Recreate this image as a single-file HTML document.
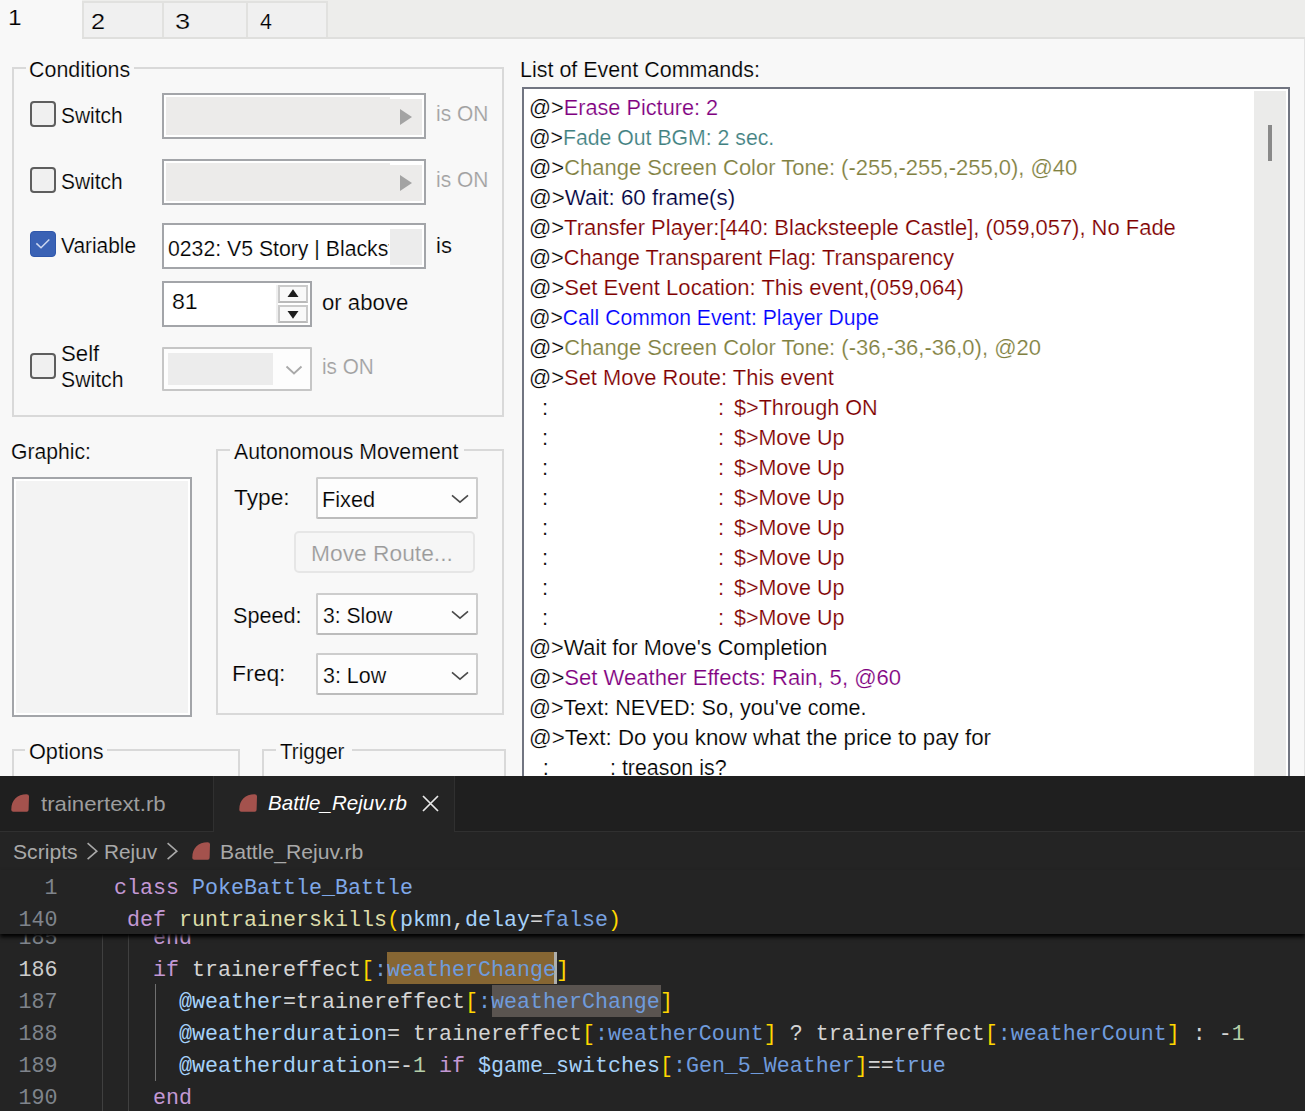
<!DOCTYPE html>
<html><head><meta charset="utf-8">
<style>
html,body{margin:0;padding:0}
body{width:1305px;height:1111px;overflow:hidden;position:relative;background:#f8f8f8;font-family:"Liberation Sans",sans-serif}
.a{position:absolute;box-sizing:border-box}
.t{position:absolute;white-space:pre;transform-origin:0 0;color:#000}
.m{position:absolute;white-space:pre;font-family:"Liberation Mono",monospace;color:#d4d4d4}
.gb{position:absolute;box-sizing:border-box;border:2px solid #d9d9d9}
.cb{position:absolute;box-sizing:border-box;width:26px;height:26px;border:2px solid #5e5e5e;border-radius:4px;background:#f0f0f0}
.combo{position:absolute;box-sizing:border-box;border:2px solid #cdcdcd;border-bottom-color:#bcbcbc;border-radius:2px;background:#fdfdfd}
.sw{position:absolute;box-sizing:border-box;border:2px solid #a3a5a9;background:#ecebea;box-shadow:inset 0 0 0 2px #fff}
</style></head><body>
<!-- tab strip -->
<div class="a" style="left:0;top:0;width:1305px;height:39px;background:#ededeb;border-bottom:2px solid #dfdfdd"></div>
<div class="a" style="left:0;top:0;width:82px;height:39px;background:#f8f8f8"></div>
<div class="a" style="left:82px;top:1px;width:246px;height:36px;background:#f0f0f0;border-top:2px solid #e1e1df"></div>
<div class="a" style="left:82px;top:1px;width:2px;height:36px;background:#e1e1df"></div>
<div class="a" style="left:162px;top:1px;width:2px;height:36px;background:#e1e1df"></div>
<div class="a" style="left:246px;top:1px;width:2px;height:36px;background:#e1e1df"></div>
<div class="a" style="left:326px;top:1px;width:2px;height:36px;background:#e1e1df"></div>
<div class="a" style="left:1304px;top:39px;width:1px;height:737px;background:#e3e3e3"></div>

<!-- conditions group -->
<div class="gb" style="left:12px;top:67px;width:492px;height:350px"></div>
<div class="a" style="left:26px;top:55px;width:108px;height:26px;background:#f8f8f8"></div>
<div class="cb" style="left:30px;top:101px"></div>
<div class="sw" style="left:162px;top:93px;width:264px;height:46px"></div>
<div class="a" style="left:390px;top:97px;width:32px;height:2px;background:#fff"></div>
<svg class="a" style="left:398px;top:108px" width="16" height="18"><path d="M2 1 L14 9 L2 17 Z" fill="#a3a3a3"/></svg>
<div class="cb" style="left:30px;top:167px"></div>
<div class="sw" style="left:162px;top:159px;width:264px;height:46px"></div>
<div class="a" style="left:390px;top:163px;width:32px;height:2px;background:#fff"></div>
<svg class="a" style="left:398px;top:174px" width="16" height="18"><path d="M2 1 L14 9 L2 17 Z" fill="#a3a3a3"/></svg>
<div class="a" style="left:30px;top:231px;width:26px;height:26px;border-radius:4px;background:#3a62b5;border:1px solid #2f57ab"></div>
<svg class="a" style="left:30px;top:231px" width="26" height="26"><path d="M6.4 12.4 L11 16.8 L19.3 8.5" stroke="#cdd8f0" stroke-width="1.5" fill="none"/></svg>
<div class="a" style="left:162px;top:223px;width:264px;height:46px;border:2px solid #a3a5a9;background:#fff"></div>
<div class="a" style="left:390px;top:229px;width:32px;height:36px;background:#ececec"></div>
<div class="a" style="left:162px;top:281px;width:150px;height:46px;border:2px solid #a3a5a9;background:#fff"></div>
<div class="a" style="left:276px;top:285px;width:2px;height:38px;background:#efefef"></div>
<div class="a" style="left:278px;top:285px;width:30px;height:18px;border:2px solid #cacaca;border-bottom-color:#bababa;background:#f9f9f9"></div>
<div class="a" style="left:278px;top:305px;width:30px;height:18px;border:2px solid #cacaca;border-bottom-color:#bababa;background:#f9f9f9"></div>
<svg class="a" style="left:276px;top:285px" width="32" height="38"><path d="M11.5 12 L17 4.3 L22.5 12 Z" fill="#1e1e1e"/><path d="M11.5 26 L17 33.8 L22.5 26 Z" fill="#1e1e1e"/></svg>
<div class="cb" style="left:30px;top:353px"></div>
<div class="a" style="left:162px;top:347px;width:150px;height:44px;border:2px solid #c6c6c6;background:#fdfdfd;border-radius:1px"></div>
<div class="a" style="left:168px;top:353px;width:105px;height:32px;background:#ececec"></div>
<svg class="a" style="left:284px;top:362px" width="20" height="14"><path d="M2.5 4.5 L10 11.5 L17.5 4.5" stroke="#a9a9a9" stroke-width="1.9" fill="none"/></svg>

<!-- graphic -->
<div class="a" style="left:12px;top:477px;width:180px;height:240px;border:2px solid #a3a5a9;background:#f3f3f3;box-shadow:inset 0 0 0 2px #fff"></div>
<!-- autonomous movement -->
<div class="gb" style="left:216px;top:449px;width:288px;height:266px"></div>
<div class="a" style="left:229.5px;top:437px;width:234.5px;height:26px;background:#f8f8f8"></div>
<div class="combo" style="left:316px;top:477px;width:162px;height:42px"></div>
<svg class="a" style="left:450px;top:490px" width="20" height="14"><path d="M2 5.3 L10 12.2 L18 5.3" stroke="#4a4a4a" stroke-width="1.6" fill="none"/></svg>
<div class="a" style="left:294px;top:531px;width:181px;height:42px;border:2px solid #e6e6e6;border-radius:5px;background:#f6f6f6"></div>
<div class="combo" style="left:316px;top:593px;width:162px;height:42px"></div>
<svg class="a" style="left:450px;top:606px" width="20" height="14"><path d="M2 5.3 L10 12.2 L18 5.3" stroke="#4a4a4a" stroke-width="1.6" fill="none"/></svg>
<div class="combo" style="left:316px;top:653px;width:162px;height:42px"></div>
<svg class="a" style="left:450px;top:667px" width="20" height="14"><path d="M2 5.3 L10 12.2 L18 5.3" stroke="#4a4a4a" stroke-width="1.6" fill="none"/></svg>
<!-- options / trigger -->
<div class="gb" style="left:12px;top:749px;width:228px;height:60px"></div>
<div class="a" style="left:25px;top:737px;width:82px;height:26px;background:#f8f8f8"></div>
<div class="gb" style="left:262px;top:749px;width:244px;height:60px"></div>
<div class="a" style="left:276px;top:737px;width:76px;height:26px;background:#f8f8f8"></div>

<!-- event list -->
<div class="a" style="left:522px;top:87px;width:768px;height:720px;border:2px solid #717581;background:#fff"></div>
<div class="a" style="left:1254px;top:91px;width:32px;height:685px;background:#ebebea"></div>
<div class="a" style="left:1268px;top:125px;width:4px;height:36px;background:#898989"></div>

<div class="t" style="left:7.78px;top:6.28px;font-size:22px;line-height:22px;transform:scale(1.1111,1.0400);-webkit-text-stroke:0.2px #f8f8f8"><span style="color:#000">1</span></div>
<div class="t" style="left:91.05px;top:9.78px;font-size:22px;line-height:22px;transform:scale(1.1500,1.0400);-webkit-text-stroke:0.2px #f8f8f8"><span style="color:#000">2</span></div>
<div class="t" style="left:174.66px;top:10.28px;font-size:22px;line-height:22px;transform:scale(1.2400,1.0400);-webkit-text-stroke:0.2px #f8f8f8"><span style="color:#000">3</span></div>
<div class="t" style="left:260.00px;top:10.28px;font-size:22px;line-height:22px;transform:scale(0.9750,1.0400);-webkit-text-stroke:0.2px #f8f8f8"><span style="color:#000">4</span></div>
<div class="t" style="left:28.73px;top:57.78px;font-size:22px;line-height:22px;transform:scale(0.9735,1.0400);-webkit-text-stroke:0.2px #f8f8f8"><span style="color:#000">Conditions</span></div>
<div class="t" style="left:61.05px;top:103.68px;font-size:22px;line-height:22px;transform:scale(0.9524,1.0400);-webkit-text-stroke:0.2px #f8f8f8"><span style="color:#000">Switch</span></div>
<div class="t" style="left:436.05px;top:102.18px;font-size:22px;line-height:22px;transform:scale(0.9519,1.0400);-webkit-text-stroke:0.2px #f8f8f8"><span style="color:#a0a0a0">is ON</span></div>
<div class="t" style="left:61.05px;top:170.18px;font-size:22px;line-height:22px;transform:scale(0.9524,1.0400);-webkit-text-stroke:0.2px #f8f8f8"><span style="color:#000">Switch</span></div>
<div class="t" style="left:436.05px;top:167.98px;font-size:22px;line-height:22px;transform:scale(0.9519,1.0400);-webkit-text-stroke:0.2px #f8f8f8"><span style="color:#a0a0a0">is ON</span></div>
<div class="t" style="left:61.40px;top:234.28px;font-size:22px;line-height:22px;transform:scale(0.9500,1.0400);-webkit-text-stroke:0.2px #f8f8f8"><span style="color:#000">Variable</span></div>
<div class="t" style="left:168.03px;top:236.98px;font-size:22px;line-height:22px;transform:scale(0.9650,1.0400);-webkit-text-stroke:0.2px #fdfdfd;width:229.0px;overflow:hidden"><span style="color:#000">0232: V5 Story </span><span style="color:#000">|</span><span style="color:#000"> Blacksteeple</span></div>
<div class="t" style="left:436.00px;top:234.28px;font-size:22px;line-height:22px;transform:scale(1.0000,1.0400);-webkit-text-stroke:0.2px #f8f8f8"><span style="color:#000">is</span></div>
<div class="t" style="left:172.35px;top:290.08px;font-size:22px;line-height:22px;transform:scale(1.0522,1.0400);-webkit-text-stroke:0.2px #fdfdfd"><span style="color:#000">81</span></div>
<div class="t" style="left:322.39px;top:291.08px;font-size:22px;line-height:22px;transform:scale(1.0071,1.0400);-webkit-text-stroke:0.2px #fdfdfd"><span style="color:#000">or above</span></div>
<div class="t" style="left:60.79px;top:342.08px;font-size:22px;line-height:22px;transform:scale(1.0081,1.0400);-webkit-text-stroke:0.2px #f8f8f8"><span style="color:#000">Self</span></div>
<div class="t" style="left:60.84px;top:367.88px;font-size:22px;line-height:22px;transform:scale(0.9635,1.0400);-webkit-text-stroke:0.2px #f8f8f8"><span style="color:#000">Switch</span></div>
<div class="t" style="left:322.46px;top:355.28px;font-size:22px;line-height:22px;transform:scale(0.9423,1.0400);-webkit-text-stroke:0.2px #f8f8f8"><span style="color:#a0a0a0">is ON</span></div>
<div class="t" style="left:11.14px;top:439.58px;font-size:22px;line-height:22px;transform:scale(0.9613,1.0400);-webkit-text-stroke:0.2px #f8f8f8"><span style="color:#000">Graphic:</span></div>
<div class="t" style="left:234.30px;top:439.68px;font-size:22px;line-height:22px;transform:scale(0.9659,1.0400);-webkit-text-stroke:0.2px #f8f8f8"><span style="color:#000">Autonomous Movement</span></div>
<div class="t" style="left:234.00px;top:485.98px;font-size:22px;line-height:22px;transform:scale(1.0346,1.0400);-webkit-text-stroke:0.2px #f8f8f8"><span style="color:#000">Type:</span></div>
<div class="t" style="left:321.62px;top:487.98px;font-size:22px;line-height:22px;transform:scale(0.9882,1.0400);-webkit-text-stroke:0.2px #fdfdfd"><span style="color:#000">Fixed</span></div>
<div class="t" style="left:310.53px;top:542.28px;font-size:22px;line-height:22px;transform:scale(1.0353,1.0400);-webkit-text-stroke:0.2px #f8f8f8"><span style="color:#9a9a9a">Move Route...</span></div>
<div class="t" style="left:232.92px;top:603.98px;font-size:22px;line-height:22px;transform:scale(0.9836,1.0400);-webkit-text-stroke:0.2px #f8f8f8"><span style="color:#000">Speed:</span></div>
<div class="t" style="left:322.84px;top:604.08px;font-size:22px;line-height:22px;transform:scale(0.9606,1.0400);-webkit-text-stroke:0.2px #fdfdfd"><span style="color:#000">3: Slow</span></div>
<div class="t" style="left:231.82px;top:661.88px;font-size:22px;line-height:22px;transform:scale(1.0417,1.0400);-webkit-text-stroke:0.2px #f8f8f8"><span style="color:#000">Freq:</span></div>
<div class="t" style="left:322.83px;top:663.98px;font-size:22px;line-height:22px;transform:scale(0.9734,1.0400);-webkit-text-stroke:0.2px #fdfdfd"><span style="color:#000">3: Low</span></div>
<div class="t" style="left:28.91px;top:739.68px;font-size:22px;line-height:22px;transform:scale(0.9851,1.0400);-webkit-text-stroke:0.2px #f8f8f8"><span style="color:#000">Options</span></div>
<div class="t" style="left:280.00px;top:739.68px;font-size:22px;line-height:22px;transform:scale(0.9362,1.0400);-webkit-text-stroke:0.2px #f8f8f8"><span style="color:#000">Trigger</span></div>
<div class="t" style="left:519.65px;top:57.68px;font-size:22px;line-height:22px;transform:scale(0.9764,1.0400);-webkit-text-stroke:0.2px #f8f8f8"><span style="color:#000">List of Event Commands:</span></div>
<div class="t" style="left:528.73px;top:96.08px;font-size:22px;line-height:22px;transform:scale(0.9868,1.0400);-webkit-text-stroke:0.2px #ffffff"><span style="color:#000">@&gt;</span><span style="color:#800080">Erase Picture: 2</span></div>
<div class="t" style="left:528.77px;top:126.08px;font-size:22px;line-height:22px;transform:scale(0.9652,1.0400);-webkit-text-stroke:0.2px #ffffff"><span style="color:#000">@&gt;</span><span style="color:#408080">Fade Out BGM: 2 sec.</span></div>
<div class="t" style="left:528.70px;top:156.08px;font-size:22px;line-height:22px;transform:scale(0.9991,1.0400);-webkit-text-stroke:0.2px #ffffff"><span style="color:#000">@&gt;</span><span style="color:#808040">Change Screen Color Tone: (-255,-255,-255,0), @40</span></div>
<div class="t" style="left:528.67px;top:186.08px;font-size:22px;line-height:22px;transform:scale(1.0150,1.0400);-webkit-text-stroke:0.2px #ffffff"><span style="color:#000">@&gt;</span><span style="color:#000040">Wait: 60 frame(s)</span></div>
<div class="t" style="left:528.70px;top:216.08px;font-size:22px;line-height:22px;transform:scale(0.9978,1.0400);-webkit-text-stroke:0.2px #ffffff"><span style="color:#000">@&gt;</span><span style="color:#800000">Transfer Player:[440: Blacksteeple Castle], (059,057), No Fade</span></div>
<div class="t" style="left:528.72px;top:246.08px;font-size:22px;line-height:22px;transform:scale(0.9881,1.0400);-webkit-text-stroke:0.2px #ffffff"><span style="color:#000">@&gt;</span><span style="color:#800000">Change Transparent Flag: Transparency</span></div>
<div class="t" style="left:528.69px;top:276.08px;font-size:22px;line-height:22px;transform:scale(1.0030,1.0400);-webkit-text-stroke:0.2px #ffffff"><span style="color:#000">@&gt;</span><span style="color:#800000">Set Event Location: This event,(059,064)</span></div>
<div class="t" style="left:528.78px;top:306.08px;font-size:22px;line-height:22px;transform:scale(0.9615,1.0400);-webkit-text-stroke:0.2px #ffffff"><span style="color:#000">@&gt;</span><span style="color:#0000ff">Call Common Event: Player Dupe</span></div>
<div class="t" style="left:528.70px;top:336.08px;font-size:22px;line-height:22px;transform:scale(0.9998,1.0400);-webkit-text-stroke:0.2px #ffffff"><span style="color:#000">@&gt;</span><span style="color:#808040">Change Screen Color Tone: (-36,-36,-36,0), @20</span></div>
<div class="t" style="left:528.71px;top:366.08px;font-size:22px;line-height:22px;transform:scale(0.9954,1.0400);-webkit-text-stroke:0.2px #ffffff"><span style="color:#000">@&gt;</span><span style="color:#800000">Set Move Route: This event</span></div>
<div class="t" style="left:541.90px;top:396.08px;font-size:22px;line-height:22px;transform:scale(1.0000,1.0400);-webkit-text-stroke:0.2px #ffffff"><span style="color:#000">:</span></div>
<div class="t" style="left:718.00px;top:396.08px;font-size:22px;line-height:22px;transform:scale(1.0000,1.0400);-webkit-text-stroke:0.2px #ffffff"><span style="color:#800000">:</span></div>
<div class="t" style="left:733.70px;top:396.08px;font-size:22px;line-height:22px;transform:scale(0.9828,1.0400);-webkit-text-stroke:0.2px #ffffff"><span style="color:#800000">$&gt;Through ON</span></div>
<div class="t" style="left:541.90px;top:426.08px;font-size:22px;line-height:22px;transform:scale(1.0000,1.0400);-webkit-text-stroke:0.2px #ffffff"><span style="color:#000">:</span></div>
<div class="t" style="left:718.00px;top:426.08px;font-size:22px;line-height:22px;transform:scale(1.0000,1.0400);-webkit-text-stroke:0.2px #ffffff"><span style="color:#800000">:</span></div>
<div class="t" style="left:733.70px;top:426.08px;font-size:22px;line-height:22px;transform:scale(0.9761,1.0400);-webkit-text-stroke:0.2px #ffffff"><span style="color:#800000">$&gt;Move Up</span></div>
<div class="t" style="left:541.90px;top:456.08px;font-size:22px;line-height:22px;transform:scale(1.0000,1.0400);-webkit-text-stroke:0.2px #ffffff"><span style="color:#000">:</span></div>
<div class="t" style="left:718.00px;top:456.08px;font-size:22px;line-height:22px;transform:scale(1.0000,1.0400);-webkit-text-stroke:0.2px #ffffff"><span style="color:#800000">:</span></div>
<div class="t" style="left:733.70px;top:456.08px;font-size:22px;line-height:22px;transform:scale(0.9761,1.0400);-webkit-text-stroke:0.2px #ffffff"><span style="color:#800000">$&gt;Move Up</span></div>
<div class="t" style="left:541.90px;top:486.08px;font-size:22px;line-height:22px;transform:scale(1.0000,1.0400);-webkit-text-stroke:0.2px #ffffff"><span style="color:#000">:</span></div>
<div class="t" style="left:718.00px;top:486.08px;font-size:22px;line-height:22px;transform:scale(1.0000,1.0400);-webkit-text-stroke:0.2px #ffffff"><span style="color:#800000">:</span></div>
<div class="t" style="left:733.70px;top:486.08px;font-size:22px;line-height:22px;transform:scale(0.9761,1.0400);-webkit-text-stroke:0.2px #ffffff"><span style="color:#800000">$&gt;Move Up</span></div>
<div class="t" style="left:541.90px;top:516.08px;font-size:22px;line-height:22px;transform:scale(1.0000,1.0400);-webkit-text-stroke:0.2px #ffffff"><span style="color:#000">:</span></div>
<div class="t" style="left:718.00px;top:516.08px;font-size:22px;line-height:22px;transform:scale(1.0000,1.0400);-webkit-text-stroke:0.2px #ffffff"><span style="color:#800000">:</span></div>
<div class="t" style="left:733.70px;top:516.08px;font-size:22px;line-height:22px;transform:scale(0.9761,1.0400);-webkit-text-stroke:0.2px #ffffff"><span style="color:#800000">$&gt;Move Up</span></div>
<div class="t" style="left:541.90px;top:546.08px;font-size:22px;line-height:22px;transform:scale(1.0000,1.0400);-webkit-text-stroke:0.2px #ffffff"><span style="color:#000">:</span></div>
<div class="t" style="left:718.00px;top:546.08px;font-size:22px;line-height:22px;transform:scale(1.0000,1.0400);-webkit-text-stroke:0.2px #ffffff"><span style="color:#800000">:</span></div>
<div class="t" style="left:733.70px;top:546.08px;font-size:22px;line-height:22px;transform:scale(0.9761,1.0400);-webkit-text-stroke:0.2px #ffffff"><span style="color:#800000">$&gt;Move Up</span></div>
<div class="t" style="left:541.90px;top:576.08px;font-size:22px;line-height:22px;transform:scale(1.0000,1.0400);-webkit-text-stroke:0.2px #ffffff"><span style="color:#000">:</span></div>
<div class="t" style="left:718.00px;top:576.08px;font-size:22px;line-height:22px;transform:scale(1.0000,1.0400);-webkit-text-stroke:0.2px #ffffff"><span style="color:#800000">:</span></div>
<div class="t" style="left:733.70px;top:576.08px;font-size:22px;line-height:22px;transform:scale(0.9761,1.0400);-webkit-text-stroke:0.2px #ffffff"><span style="color:#800000">$&gt;Move Up</span></div>
<div class="t" style="left:541.90px;top:606.08px;font-size:22px;line-height:22px;transform:scale(1.0000,1.0400);-webkit-text-stroke:0.2px #ffffff"><span style="color:#000">:</span></div>
<div class="t" style="left:718.00px;top:606.08px;font-size:22px;line-height:22px;transform:scale(1.0000,1.0400);-webkit-text-stroke:0.2px #ffffff"><span style="color:#800000">:</span></div>
<div class="t" style="left:733.70px;top:606.08px;font-size:22px;line-height:22px;transform:scale(0.9761,1.0400);-webkit-text-stroke:0.2px #ffffff"><span style="color:#800000">$&gt;Move Up</span></div>
<div class="t" style="left:528.73px;top:636.08px;font-size:22px;line-height:22px;transform:scale(0.9860,1.0400);-webkit-text-stroke:0.2px #ffffff"><span style="color:#000">@&gt;</span><span style="color:#000000">Wait for Move's Completion</span></div>
<div class="t" style="left:528.69px;top:666.08px;font-size:22px;line-height:22px;transform:scale(1.0030,1.0400);-webkit-text-stroke:0.2px #ffffff"><span style="color:#000">@&gt;</span><span style="color:#800080">Set Weather Effects: Rain, 5, @60</span></div>
<div class="t" style="left:528.74px;top:696.08px;font-size:22px;line-height:22px;transform:scale(0.9815,1.0400);-webkit-text-stroke:0.2px #ffffff"><span style="color:#000">@&gt;</span><span style="color:#000000">Text: NEVED: So, you've come.</span></div>
<div class="t" style="left:528.67px;top:726.08px;font-size:22px;line-height:22px;transform:scale(1.0134,1.0400);-webkit-text-stroke:0.2px #ffffff"><span style="color:#000">@&gt;</span><span style="color:#000000">Text: Do you know what the price to pay for</span></div>
<div class="t" style="left:542.70px;top:756.08px;font-size:22px;line-height:22px;transform:scale(1.0000,1.0400);-webkit-text-stroke:0.2px #ffffff"><span style="color:#000">:</span></div>
<div class="t" style="left:610.45px;top:756.08px;font-size:22px;line-height:22px;transform:scale(0.9726,1.0400);-webkit-text-stroke:0.2px #ffffff"><span style="color:#000">: treason is?</span></div>

<!-- VS Code -->
<div class="a" style="left:0;top:776px;width:1305px;height:335px;background:#242424;overflow:hidden">
<div class="a" style="left:0;top:0;width:1305px;height:56px;background:#1f1f1f;border-bottom:1px solid #303030"></div>
<div class="a" style="left:213px;top:0;width:1px;height:55px;background:#303030"></div>
<div class="a" style="left:214px;top:0;width:240px;height:57px;background:#242424"></div>
<div class="a" style="left:454px;top:0;width:1px;height:56px;background:#303030"></div>
<svg class="a" style="left:11px;top:18px" width="19" height="19"><path d="M0.3 15.5 C0.3 6 6.5 0.3 15.5 0.3 Q18 0.3 18 2.3 L17.6 15.8 Q17.6 17.7 15.7 17.7 L2.3 17.7 Q0.3 17.7 0.3 16 Z" fill="#a4524d"/></svg>
<svg class="a" style="left:239px;top:18px" width="19" height="19"><path d="M0.3 15.5 C0.3 6 6.5 0.3 15.5 0.3 Q18 0.3 18 2.3 L17.6 15.8 Q17.6 17.7 15.7 17.7 L2.3 17.7 Q0.3 17.7 0.3 16 Z" fill="#a4524d"/></svg>
<svg class="a" style="left:421px;top:18px" width="19" height="19"><path d="M2 2 L17 17 M17 2 L2 17" stroke="#e8e8e8" stroke-width="1.7"/></svg>
<svg class="a" style="left:85px;top:66px" width="14" height="19"><path d="M2.6 1.2 L11.8 9.2 L2.6 17.2" stroke="#a9a9a9" stroke-width="1.6" fill="none"/></svg>
<svg class="a" style="left:165px;top:66px" width="14" height="19"><path d="M2.6 1.2 L11.8 9.2 L2.6 17.2" stroke="#a9a9a9" stroke-width="1.6" fill="none"/></svg>
<svg class="a" style="left:192px;top:66px" width="19" height="19"><path d="M0.3 15.5 C0.3 6 6.5 0.3 15.5 0.3 Q18 0.3 18 2.3 L17.6 15.8 Q17.6 17.7 15.7 17.7 L2.3 17.7 Q0.3 17.7 0.3 16 Z" fill="#a4524d"/></svg>
<div class="a" style="left:101.5px;top:158px;width:1.3px;height:177px;background:#404040"></div>
<div class="a" style="left:127.8px;top:158px;width:1.3px;height:177px;background:#404040"></div>
<div class="a" style="left:154.5px;top:208px;width:1.5px;height:97px;background:#707070"></div>
<div class="a" style="left:386.7px;top:176.4px;width:167.7px;height:31.8px;background:#866633"></div>
<div class="a" style="left:554.4px;top:176.4px;width:2.6px;height:31.8px;background:#aeafad"></div>
<div class="a" style="left:491.9px;top:209.0px;width:168.7px;height:31.6px;background:#5a5450"></div>
<div class="m" style="left:18.50px;top:151.95px;font-size:21.667px;line-height:21.667px;color:#7f848c">185</div>
<div class="m" style="left:153.00px;top:151.95px;font-size:21.667px;line-height:21.667px"><span style="color:#c398d4">end</span></div>
<div class="m" style="left:18.50px;top:184.00px;font-size:21.667px;line-height:21.667px;color:#cccccc">186</div>
<div class="m" style="left:153.00px;top:184.00px;font-size:21.667px;line-height:21.667px"><span style="color:#c398d4">if</span><span style="color:#d4d4d4"> trainereffect</span><span style="color:#ffd700">[</span><span style="color:#6f9bdc">:weatherChange</span><span style="color:#ffd700">]</span></div>
<div class="m" style="left:18.50px;top:216.05px;font-size:21.667px;line-height:21.667px;color:#7f848c">187</div>
<div class="m" style="left:179.00px;top:216.05px;font-size:21.667px;line-height:21.667px"><span style="color:#a6d2fa">@weather</span><span style="color:#d4d4d4">=trainereffect</span><span style="color:#ffd700">[</span><span style="color:#6f9bdc">:weatherChange</span><span style="color:#ffd700">]</span></div>
<div class="m" style="left:18.50px;top:248.10px;font-size:21.667px;line-height:21.667px;color:#7f848c">188</div>
<div class="m" style="left:179.00px;top:248.10px;font-size:21.667px;line-height:21.667px"><span style="color:#a6d2fa">@weatherduration</span><span style="color:#d4d4d4">= trainereffect</span><span style="color:#ffd700">[</span><span style="color:#6f9bdc">:weatherCount</span><span style="color:#ffd700">]</span><span style="color:#d4d4d4"> ? trainereffect</span><span style="color:#ffd700">[</span><span style="color:#6f9bdc">:weatherCount</span><span style="color:#ffd700">]</span><span style="color:#d4d4d4"> : -</span><span style="color:#b5cea8">1</span></div>
<div class="m" style="left:18.50px;top:280.15px;font-size:21.667px;line-height:21.667px;color:#7f848c">189</div>
<div class="m" style="left:179.00px;top:280.15px;font-size:21.667px;line-height:21.667px"><span style="color:#a6d2fa">@weatherduration</span><span style="color:#d4d4d4">=-</span><span style="color:#b5cea8">1</span><span style="color:#d4d4d4"> </span><span style="color:#c398d4">if</span><span style="color:#d4d4d4"> </span><span style="color:#a6d2fa">$game_switches</span><span style="color:#ffd700">[</span><span style="color:#6f9bdc">:Gen_5_Weather</span><span style="color:#ffd700">]</span><span style="color:#d4d4d4">==</span><span style="color:#78a2e0">true</span></div>
<div class="m" style="left:18.50px;top:312.20px;font-size:21.667px;line-height:21.667px;color:#7f848c">190</div>
<div class="m" style="left:153.00px;top:312.20px;font-size:21.667px;line-height:21.667px"><span style="color:#c398d4">end</span></div>
<div class="a" style="left:0;top:94px;width:1305px;height:64px;background:#242424;box-shadow:0 3px 4px #000"></div>
<div class="m" style="left:44.50px;top:101.50px;font-size:21.667px;line-height:21.667px;color:#7f848c">1</div>
<div class="m" style="left:114.00px;top:101.50px;font-size:21.667px;line-height:21.667px"><span style="color:#c398d4">class</span><span style="color:#d4d4d4"> </span><span style="color:#7fa8e8">PokeBattle_Battle</span></div>
<div class="m" style="left:18.50px;top:133.50px;font-size:21.667px;line-height:21.667px;color:#7f848c">140</div>
<div class="m" style="left:127.00px;top:133.50px;font-size:21.667px;line-height:21.667px"><span style="color:#c398d4">def</span><span style="color:#d4d4d4"> </span><span style="color:#dcdcaa">runtrainerskills</span><span style="color:#ffd700">(</span><span style="color:#a6d2fa">pkmn</span><span style="color:#d4d4d4">,</span><span style="color:#a6d2fa">delay</span><span style="color:#d4d4d4">=</span><span style="color:#78a2e0">false</span><span style="color:#ffd700">)</span></div>
<div class="t" style="left:40.80px;top:17.40px;font-size:21px;line-height:21px;transform:scale(1.0581,1.0000)"><span style="color:#9d9d9d">trainertext.rb</span></div>
<div class="t" style="left:268.02px;top:16.40px;font-size:21px;line-height:21px;font-style:italic;transform:scale(0.9786,1.0000)"><span style="color:#ffffff">Battle_Rejuv.rb</span></div>
<div class="t" style="left:12.79px;top:65.20px;font-size:21px;line-height:21px;transform:scale(1.0063,1.0000)"><span style="color:#a9a9a9">Scripts</span></div>
<div class="t" style="left:103.72px;top:65.20px;font-size:21px;line-height:21px;transform:scale(0.9904,1.0000)"><span style="color:#a9a9a9">Rejuv</span></div>
<div class="t" style="left:220.48px;top:64.70px;font-size:21px;line-height:21px;transform:scale(1.0086,1.0000)"><span style="color:#a9a9a9">Battle_Rejuv.rb</span></div>
</div>
</body></html>
